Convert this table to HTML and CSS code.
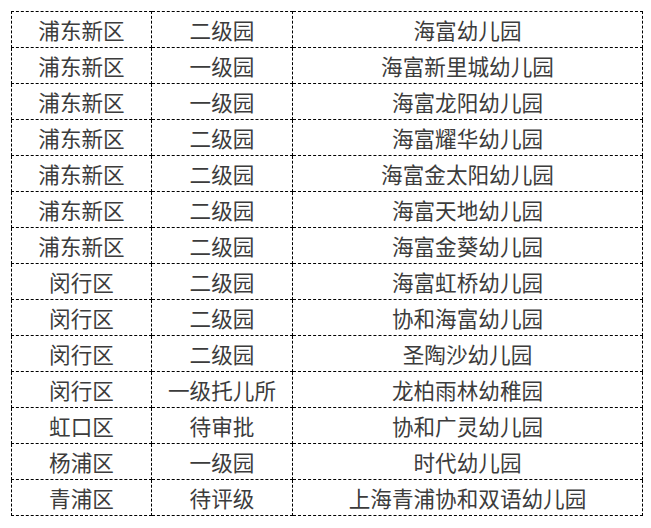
FILE: index.html
```html
<!DOCTYPE html>
<html lang="zh-CN">
<head>
<meta charset="utf-8">
<link rel="stylesheet" href="styles.css">
</head>
<body>
<table class="list">
<colgroup><col class="c1"><col class="c2"><col class="c3"></colgroup>
<tr><td>浦东新区</td><td>二级园</td><td>海富幼儿园</td></tr>
<tr><td>浦东新区</td><td>一级园</td><td>海富新里城幼儿园</td></tr>
<tr><td>浦东新区</td><td>一级园</td><td>海富龙阳幼儿园</td></tr>
<tr><td>浦东新区</td><td>二级园</td><td>海富耀华幼儿园</td></tr>
<tr><td>浦东新区</td><td>二级园</td><td>海富金太阳幼儿园</td></tr>
<tr><td>浦东新区</td><td>二级园</td><td>海富天地幼儿园</td></tr>
<tr><td>浦东新区</td><td>二级园</td><td>海富金葵幼儿园</td></tr>
<tr><td>闵行区</td><td>二级园</td><td>海富虹桥幼儿园</td></tr>
<tr><td>闵行区</td><td>二级园</td><td>协和海富幼儿园</td></tr>
<tr><td>闵行区</td><td>二级园</td><td>圣陶沙幼儿园</td></tr>
<tr><td>闵行区</td><td>一级托儿所</td><td>龙柏雨林幼稚园</td></tr>
<tr><td>虹口区</td><td>待审批</td><td>协和广灵幼儿园</td></tr>
<tr><td>杨浦区</td><td>一级园</td><td>时代幼儿园</td></tr>
<tr><td>青浦区</td><td>待评级</td><td>上海青浦协和双语幼儿园</td></tr>
</table>
</body>
</html>
```
FILE: styles.css
```css
html, body {
  margin: 0;
  padding: 0;
  background: #fff;
}
body {
  padding: 11px 0 0 11px;
}
.list {
  border-collapse: collapse;
  table-layout: fixed;
  width: 631px;
  font-family: "Noto Sans CJK SC", "Microsoft YaHei", sans-serif;
  font-size: 21.6px;
  color: #3c3c3c;
}
.c1 { width: 140px; }
.c2 { width: 141px; }
.c3 { width: 350px; }
.list td {
  border: 1px dashed #000;
  height: 35px;
  padding: 0;
  text-align: center;
  vertical-align: middle;
  line-height: 35px;
  white-space: nowrap;
}
```
